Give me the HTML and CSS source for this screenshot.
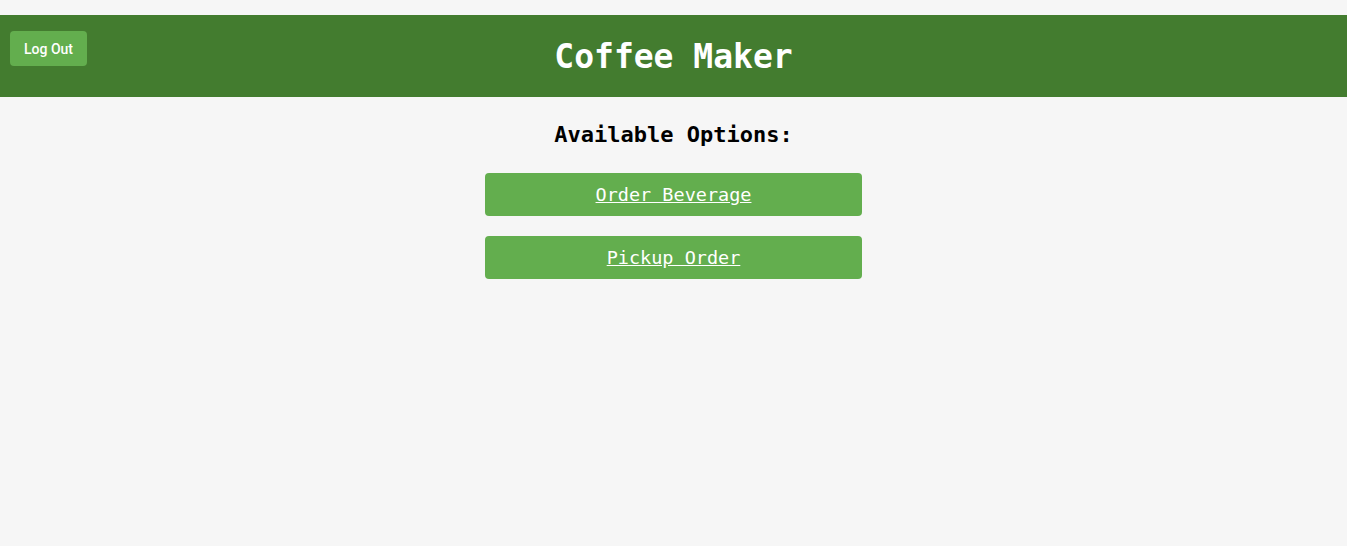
FILE: index.html
```html
<!DOCTYPE html>
<html>
<head>
<meta charset="utf-8">
<link rel="stylesheet" href="styles.css">
</head>
<body>
<header class="header">
  <button class="logout">Log Out</button>
  <h1 class="title">Coffee Maker</h1>
</header>
<main class="main">
  <h2 class="subtitle">Available Options:</h2>
  <div class="options">
    <a class="option" href="#">Order Beverage</a>
    <a class="option" href="#">Pickup Order</a>
  </div>
</main>
</body>
</html>
```
FILE: styles.css
```css
html, body {
  margin: 0;
  padding: 0;
  background: #f6f6f6;
}
body {
  font-family: "DejaVu Sans Mono", "Liberation Mono", monospace;
}
.header {
  position: relative;
  margin-top: 15px;
  height: 82px;
  background: #437c2f;
  display: flex;
  align-items: center;
  justify-content: center;
}
.title {
  margin: 0;
  color: #ffffff;
  font-size: 33px;
  font-weight: bold;
}
.logout {
  position: absolute;
  top: 16px;
  left: 10px;
  width: 77px;
  height: 35px;
  border: none;
  border-radius: 4px;
  background: #63ae4e;
  color: #ffffff;
  font-family: Roboto, "Liberation Sans", Arial, sans-serif;
  font-size: 14px;
  font-weight: 500;
  padding: 0;
  cursor: pointer;
}
.main {
  display: flex;
  flex-direction: column;
  align-items: center;
}
.subtitle {
  margin: 24px 0 0 0;
  font-size: 22px;
  font-weight: bold;
  color: #000;
  line-height: 28px;
}
.options {
  margin-top: 24px;
  display: flex;
  flex-direction: column;
  gap: 20px;
}
.option {
  display: flex;
  align-items: center;
  justify-content: center;
  width: 377px;
  height: 43px;
  background: #63ae4e;
  border-radius: 4px;
  color: #ffffff;
  font-size: 18.5px;
  text-decoration: underline;
}
```
